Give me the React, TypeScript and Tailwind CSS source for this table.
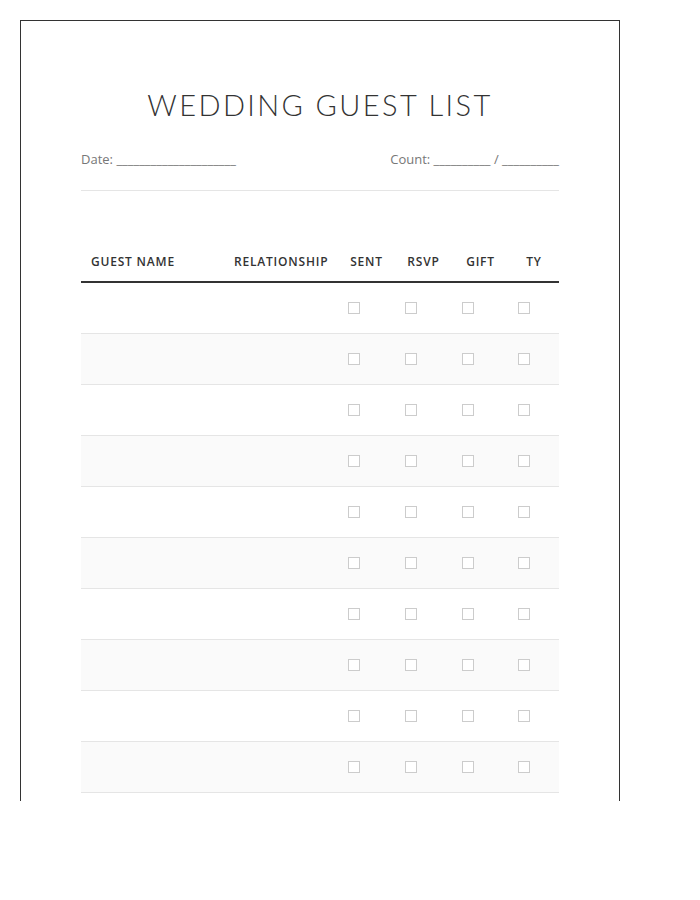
import React from "react";

const rows = Array.from({ length: 10 }, (_, i) => i);

function Box() {
  return <span className="block w-[12px] h-[12px] border border-[#cccccc] bg-white"></span>;
}

export default function App() {
  return (
    <div className="w-[700px] h-[900px] bg-white pt-[20px] pl-[20px]" style={{ fontFamily: '"Open Sans", "Liberation Sans", sans-serif' }}>
      <div className="w-[600px] h-[781px] border-t border-l border-r border-[#333333] overflow-hidden px-[60px] pt-[64px]">
        <h1
          className="text-center text-[29px] font-light tracking-[2.4px] text-[#333333] leading-[40px] uppercase"
          style={{ fontFamily: 'Lato, "Open Sans", sans-serif' }}
        >
          Wedding Guest List
        </h1>
        <div className="mt-[25px] flex justify-between text-[13px] text-[#777777] leading-[18px] pb-[22px] border-b border-[#e5e5e5]">
          <span>Date: _____________________</span>
          <span>Count: __________ / __________</span>
        </div>
        <div className="mt-[63px]">
          <div className="grid grid-cols-[143px_114px_57px_57px_57px_50px] border-b-2 border-[#333333] text-[12px] font-semibold tracking-[0.8px] text-[#333333] leading-[16px] pb-[11px]">
            <div className="pl-[10px]">GUEST NAME</div>
            <div className="pl-[10px]">RELATIONSHIP</div>
            <div className="text-center">SENT</div>
            <div className="text-center">RSVP</div>
            <div className="text-center">GIFT</div>
            <div className="text-center">TY</div>
          </div>
          {rows.map((i) => (
            <div
              key={i}
              className={`grid grid-cols-[143px_114px_57px_57px_57px_50px] h-[51px] items-center border-b border-[#e5e5e5] ${i % 2 === 1 ? "bg-[#fafafa]" : "bg-white"}`}
            >
              <div></div>
              <div></div>
              <div className="pl-[10px]"><Box /></div>
              <div className="pl-[10px]"><Box /></div>
              <div className="pl-[10px]"><Box /></div>
              <div className="pl-[9px]"><Box /></div>
            </div>
          ))}
        </div>
      </div>
    </div>
  );
}
